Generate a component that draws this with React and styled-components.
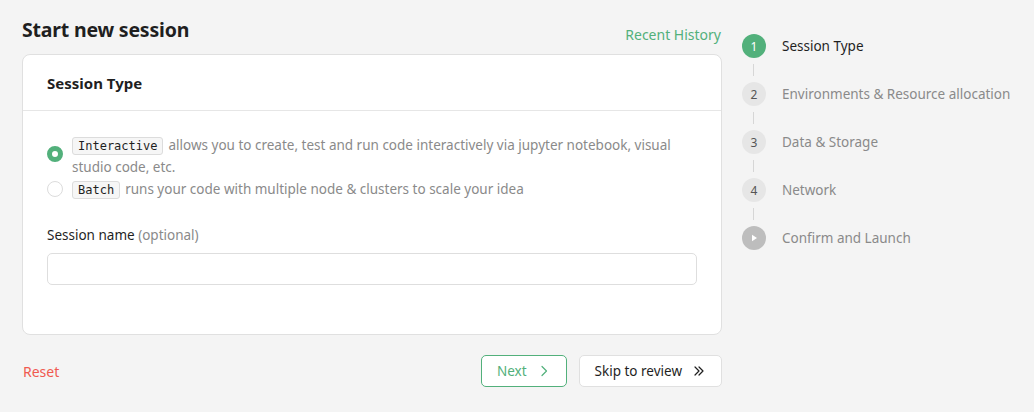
import React from 'react'
import styled, { createGlobalStyle } from 'styled-components'

const Global = createGlobalStyle`
  html, body {
    margin: 0;
    background: #f4f4f4;
  }
  body {
    font-family: "Noto Sans", "Open Sans", sans-serif;
    color: #1f1f1f;
  }
`

const Page = styled.div`
  display: flex;
  gap: 20px;
  padding: 18px 0 0 22px;
  width: 1034px;
  height: 412px;
  box-sizing: border-box;
`

const Main = styled.div`
  flex: none;
  width: 700px;
  display: flex;
  flex-direction: column;
`

const TitleRow = styled.div`
  display: flex;
  justify-content: space-between;
  align-items: flex-start;
  height: 36px;
`

const Title = styled.h1`
  margin: 0;
  font-size: 19.5px;
  font-weight: 700;
  line-height: 24px;
  letter-spacing: -0.2px;
`

const LinkText = styled.a`
  color: #52b07b;
  font-size: 14px;
  line-height: 20px;
  text-decoration: none;
  margin-top: 7px;
  margin-right: 1px;
  cursor: pointer;
`

const Card = styled.div`
  background: #fff;
  border: 1px solid #e0e0e0;
  border-radius: 8px;
  height: 281px;
  box-sizing: border-box;
`

const CardHeader = styled.div`
  height: 55px;
  padding: 0 24px;
  display: flex;
  align-items: center;
  border-bottom: 1px solid #e6e6e6;
  font-size: 15px;
  font-weight: 700;
`

const CardBody = styled.div`
  padding: 23px 24px 0 24px;
`

const Options = styled.div`
  display: flex;
  flex-direction: column;
`

const Option = styled.label`
  display: flex;
  align-items: ${p => (p.$top ? 'flex-start' : 'center')};
  gap: 9px;
  font-size: 13.5px;
  line-height: 22px;
  color: #8a8a8a;
`

const Radio = styled.span`
  flex: none;
  width: 16px;
  height: 16px;
  box-sizing: border-box;
  border-radius: 50%;
  margin-top: ${p => (p.$top ? '12px' : '0')};
  border: ${p => (p.$checked ? '5px solid #52b07b' : '1px solid #dcdcdc')};
  background: #fff;
`

const Code = styled.code`
  display: inline-block;
  line-height: 16px;
  font-family: "DejaVu Sans Mono", "Liberation Mono", monospace;
  font-size: 12px;
  color: #1f1f1f;
  background: #f6f6f6;
  border: 1px solid #dcdcdc;
  border-radius: 3px;
  padding: 0 5px;
  margin-right: 5px;
`

const Field = styled.div`
  margin-top: 24px;
  display: flex;
  flex-direction: column;
  gap: 7px;
`

const FieldLabel = styled.div`
  font-size: 13.5px;
  line-height: 22px;
  color: #1f1f1f;
`

const Muted = styled.span`
  color: #8a8a8a;
`

const Input = styled.input`
  height: 32px;
  border: 1px solid #dedede;
  border-radius: 5px;
  box-sizing: border-box;
  outline: none;
  padding: 0 10px;
  font-family: inherit;
`

const Footer = styled.div`
  display: flex;
  align-items: center;
  justify-content: space-between;
  margin-top: 20px;
`

const Reset = styled.a`
  color: #f05a50;
  font-size: 14px;
  margin-left: 1px;
  cursor: pointer;
`

const Actions = styled.div`
  display: flex;
  gap: 12px;
`

const Button = styled.button`
  height: 32px;
  display: flex;
  align-items: center;
  gap: 10px;
  padding: 0 15px;
  border-radius: 5px;
  font-family: inherit;
  font-size: 13.5px;
  cursor: pointer;
  background: #fff;
  border: 1px solid ${p => (p.$primary ? '#52b07b' : '#e0e0e0')};
  color: ${p => (p.$primary ? '#52b07b' : '#1f1f1f')};
  box-sizing: border-box;
`

const Steps = styled.div`
  display: flex;
  flex-direction: column;
  padding-top: 16px;
  white-space: nowrap;
`

const Step = styled.div`
  display: flex;
  align-items: center;
  gap: 16px;
  height: 24px;
  font-size: 13.5px;
  color: ${p => (p.$active ? '#1f1f1f' : '#8a8a8a')};
`

const Dot = styled.span`
  flex: none;
  width: 24px;
  height: 24px;
  border-radius: 50%;
  display: flex;
  align-items: center;
  justify-content: center;
  font-size: 12px;
  background: ${p => (p.$active ? '#52b07b' : p.$play ? '#bdbdbd' : '#e6e6e6')};
  color: ${p => (p.$active ? '#fff' : '#555')};
`

const Connector = styled.div`
  width: 1px;
  height: 12px;
  margin: 6px 0 6px 11px;
  background: #d6d6d6;
`

const Chevron = ({ double }) => (
  <svg width="14" height="14" viewBox="0 0 14 14" fill="none" stroke="currentColor" strokeWidth="1.2" strokeLinecap="round" strokeLinejoin="round">
    {double ? (
      <>
        <path d="M3 3l4 4-4 4" />
        <path d="M7 3l4 4-4 4" />
      </>
    ) : (
      <path d="M5 2.5l4.5 4.5L5 11.5" />
    )}
  </svg>
)

const Play = () => (
  <svg width="10" height="10" viewBox="0 0 10 10">
    <path d="M3 1.8L8 5 3 8.2z" fill="#fff" />
  </svg>
)

const steps = ['Session Type', 'Environments & Resource allocation', 'Data & Storage', 'Network', 'Confirm and Launch']

const App = () => {
  return (
    <Page>
      <Global />
      <Main>
        <TitleRow>
          <Title>Start new session</Title>
          <LinkText>Recent History</LinkText>
        </TitleRow>
        <Card>
          <CardHeader>Session Type</CardHeader>
          <CardBody>
            <Options>
              <Option $top>
                <Radio $checked $top />
                <span>
                  <Code>Interactive</Code>allows you to create, test and run code interactively via jupyter notebook, visual studio code, etc.
                </span>
              </Option>
              <Option>
                <Radio />
                <span>
                  <Code>Batch</Code>runs your code with multiple node &amp; clusters to scale your idea
                </span>
              </Option>
            </Options>
            <Field>
              <FieldLabel>
                Session name <Muted>(optional)</Muted>
              </FieldLabel>
              <Input />
            </Field>
          </CardBody>
        </Card>
        <Footer>
          <Reset>Reset</Reset>
          <Actions>
            <Button $primary>
              Next <Chevron />
            </Button>
            <Button>
              Skip to review <Chevron double />
            </Button>
          </Actions>
        </Footer>
      </Main>
      <Steps>
        {steps.map((s, i) => (
          <React.Fragment key={s}>
            {i > 0 && <Connector />}
            <Step $active={i === 0}>
              <Dot $active={i === 0} $play={i === 4}>
                {i === 4 ? <Play /> : i + 1}
              </Dot>
              {s}
            </Step>
          </React.Fragment>
        ))}
      </Steps>
    </Page>
  )
}

export default App
